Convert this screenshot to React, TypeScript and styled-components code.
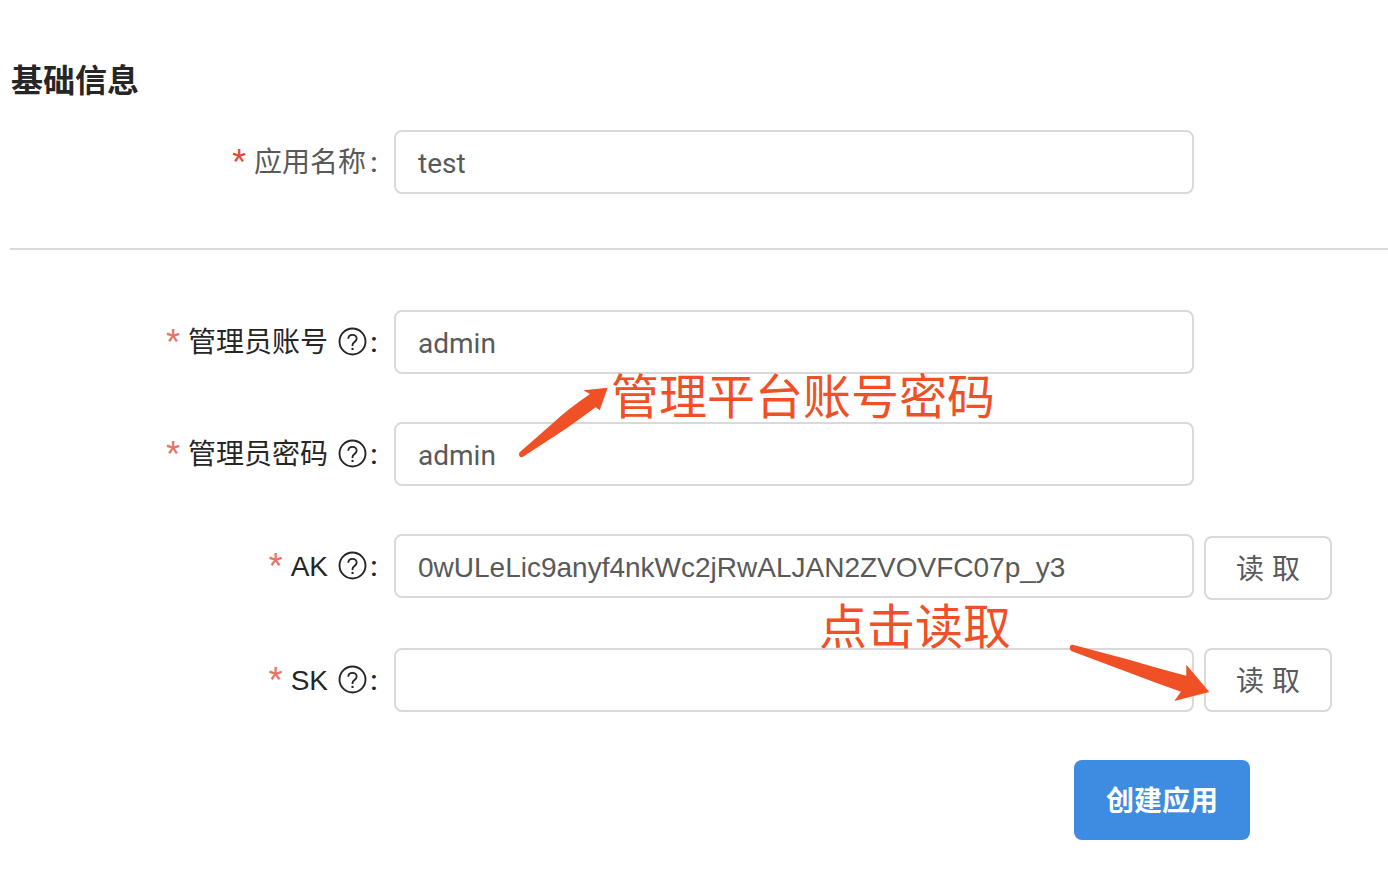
import React, { useState } from 'react';
import styled, { createGlobalStyle } from 'styled-components';

const GlobalStyle = createGlobalStyle`
  *, *::before, *::after { box-sizing: border-box; }
  body {
    margin: 0;
    background: #ffffff;
    color: #262626;
    font-family: "Liberation Sans", "Noto Sans CJK SC", sans-serif;
    font-size: 28px;
  }
`;

const Page = styled.main`
  padding: 56px 0 32px 10px;
`;

const Title = styled.h2`
  margin: 0 0 24px;
  padding-left: 1px;
  font-size: 32px;
  line-height: 50px;
  font-weight: 700;
`;

const Divider = styled.hr`
  margin: 54px 0 60px;
  border: 0;
  height: 2px;
  background: #d9d9d9;
`;

const Fields = styled.div`
  display: flex;
  flex-direction: column;
  gap: 48px;
`;

const Row = styled.div<{ $tall?: boolean }>`
  position: relative;
  display: grid;
  grid-template-columns: 384px minmax(0, 1fr) 194px;
  align-items: start;
  min-height: ${(p) => (p.$tall ? 66 : 64)}px;
`;

const Label = styled.label<{ $muted?: boolean }>`
  display: flex;
  justify-content: flex-end;
  align-items: center;
  height: 64px;
  padding-right: 16px;
  line-height: 40px;
  color: ${(p) => (p.$muted ? '#595959' : '#262626')};
`;

const LabelText = styled.span`
  padding-top: 2px;
`;

const Required = styled.span<{ $soft?: boolean }>`
  margin-right: 8px;
  padding-bottom: 4px;
  font-family: Roboto, sans-serif;
  font-size: 32px;
  color: ${(p) => (p.$soft ? '#e87468' : '#e24c3a')};
`;

const Colon = styled.span`
  width: 8px;
  margin-left: 4px;
  padding-top: 2px;
  font-family: Roboto, sans-serif;
  font-weight: 500;
  text-align: center;
`;

const HelpIcon = styled.svg`
  flex: none;
  width: 28px;
  height: 28px;
  margin-left: 10px;
  overflow: visible;
`;

const TextInput = styled.input<{ $latin?: boolean }>`
  width: 100%;
  height: 64px;
  padding: ${(p) => (p.$latin ? 4 : 2)}px 22px 0;
  border: 2px solid #d9d9d9;
  border-radius: 8px;
  background: #ffffff;
  color: #595959;
  font-family: ${(p) => (p.$latin ? '"Liberation Sans"' : 'Roboto')}, "Noto Sans CJK SC", sans-serif;
  font-size: 28px;
  outline: none;
  &:focus { border-color: #3d8ce2; }
`;

const ReadButton = styled.button`
  align-self: end;
  width: 128px;
  height: 64px;
  margin-left: 10px;
  padding: 0 0 2px;
  border: 2px solid #d9d9d9;
  border-radius: 8px;
  background: #ffffff;
  color: #595959;
  font-family: inherit;
  font-size: 28px;
  cursor: pointer;
`;

const Footer = styled.div`
  display: flex;
  justify-content: flex-end;
  margin-top: 48px;
  padding-right: 138px;
`;

const SubmitButton = styled.button`
  width: 176px;
  height: 80px;
  padding: 0 0 2px;
  border: 0;
  border-radius: 8px;
  background: #3d8ce2;
  color: #ffffff;
  font-family: inherit;
  font-size: 28px;
  font-weight: 700;
  cursor: pointer;
`;

const Note = styled.span`
  position: absolute;
  z-index: 1;
  font-size: 48px;
  line-height: 56px;
  color: #f05026;
  white-space: nowrap;
  pointer-events: none;
`;

const AccountNote = styled(Note)`
  left: 601px;
  top: 60px;
`;

const ReadNote = styled(Note)`
  right: 377px;
  top: -48px;
`;

const Arrow = styled.svg`
  position: absolute;
  z-index: 1;
  fill: #f05026;
  pointer-events: none;
`;

const AccountArrow = styled(Arrow)`
  left: 508px;
  top: 76px;
`;

const ReadArrow = styled(Arrow)`
  right: 176px;
  top: -6px;
`;

type FieldProps = {
  id: string;
  label: string;
  initial: string;
  muted?: boolean;
  help?: boolean;
  latin?: boolean;
  readable?: boolean;
  tall?: boolean;
  children?: React.ReactNode;
};

function Help() {
  return (
    <HelpIcon viewBox="0 0 28 28" fill="none" stroke="currentColor" aria-hidden="true">
      <circle cx="14.500" cy="13.500" r="13" strokeWidth="1.900" />
      <path d="M10.300 10.800c0-2.400 1.800-4 4.200-4s4.200 1.600 4.200 3.800c0 3.300-4.200 3.400-4.200 6.300v1" strokeWidth="1.800" />
      <circle cx="14.500" cy="20.900" r="1.200" fill="currentColor" stroke="none" />
    </HelpIcon>
  );
}

function Field({ id, label, initial, muted, help, latin, readable, tall, children }: FieldProps) {
  const [value, setValue] = useState(initial);
  return (
    <Row $tall={tall}>
      <Label htmlFor={id} $muted={muted}>
        <Required $soft={!muted}>*</Required>
        <LabelText>{label}</LabelText>
        {help && <Help />}
        <Colon>:</Colon>
      </Label>
      <TextInput id={id} $latin={latin} value={value} onChange={(e) => setValue(e.target.value)} />
      {readable && <ReadButton type="button">读 取</ReadButton>}
      {children}
    </Row>
  );
}

export default function App() {
  return (
    <>
      <GlobalStyle />
      <Page>
        <Title>基础信息</Title>
        <form onSubmit={(e) => e.preventDefault()}>
          <Field id="app-name" label="应用名称" initial="test" muted />
          <Divider />
          <Fields>
            <Field id="account" label="管理员账号" initial="admin" help>
              <AccountNote>管理平台账号密码</AccountNote>
              <AccountArrow width="92" height="74" viewBox="0 0 92 74">
                <path d="M89.700 1.700 65.300 4.300 72 8Q50 23 35 37L1.400 66.500Q.4 68.500 1.500 70.200Q3 72 5 70.700L49 42 77.700 21.300L81.700 24.300Z" />
              </AccountArrow>
            </Field>
            <Field id="password" label="管理员密码" initial="admin" help />
            <Field id="ak" label="AK" initial="0wULeLic9anyf4nkWc2jRwALJAN2ZVOVFC07p_y3" help latin readable tall />
            <Field id="sk" label="SK" initial="" help latin readable>
              <ReadNote>点击读取</ReadNote>
              <ReadArrow width="144" height="62" viewBox="0 0 144 62">
                <path d="M4.700 2.700L62 18Q92 27 118.300 33.700V22.700L141.300 50 106.300 59 113 49.700Q88 41 62 31L3.300 9Q1 7 2 4.500Q2.800 2.300 4.700 2.700Z" />
              </ReadArrow>
            </Field>
          </Fields>
          <Footer>
            <SubmitButton type="submit">创建应用</SubmitButton>
          </Footer>
        </form>
      </Page>
    </>
  );
}
